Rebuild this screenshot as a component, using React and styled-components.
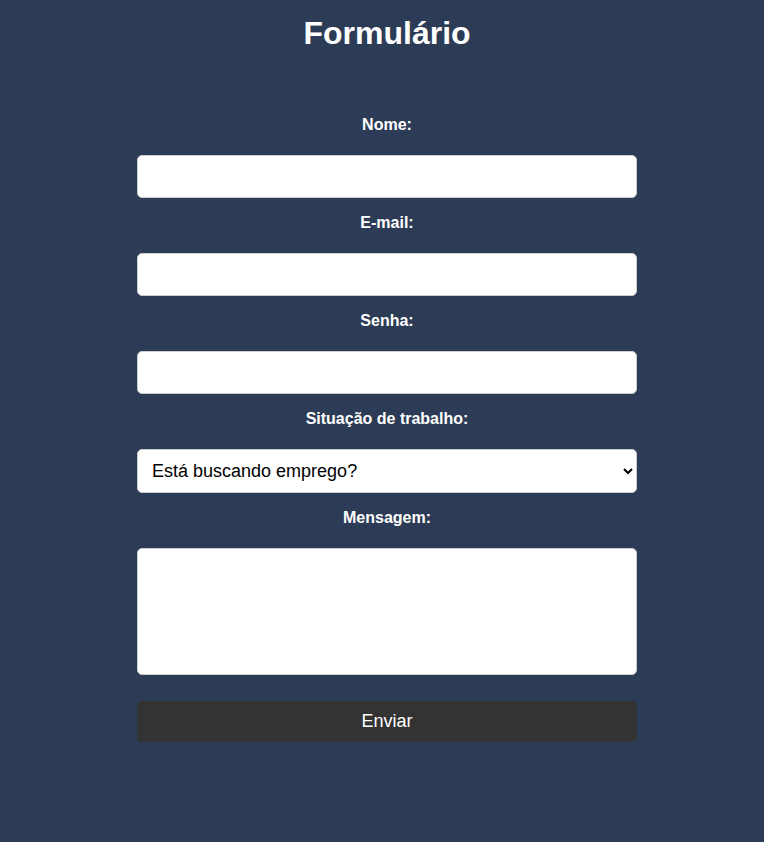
import React from 'react'
import styled, { createGlobalStyle } from 'styled-components';

const GlobalStyle = createGlobalStyle`
  html, body {
    margin: 0;
    padding: 0;
    background-color: #2d3c56;
    font-family: "Liberation Sans", Arial, sans-serif;
  }
`;

export const Container = styled.div`
  box-sizing: border-box;
  min-height: 842px;
  padding-left: 10px;
  background-color: #2d3c56;
  display: flex;
  flex-direction: column;
  align-items: center;
`;

export const Title = styled.h1`
  margin: 15px 0 0;
  font-size: 32px;
  line-height: 37px;
  font-weight: 700;
  color: #fff;
`;

export const Form = styled.form`
  width: 500px;
  margin-top: 64px;
  display: flex;
  flex-direction: column;
`;

export const Label = styled.label`
  display: block;
  text-align: center;
  color: #fff;
  font-size: 16px;
  font-weight: 700;
  line-height: 18px;
  margin: ${p => (p.$first ? '0' : '16px')} 0 21px;
`;

const fieldBase = `
  box-sizing: border-box;
  width: 100%;
  border: 1px solid #ccc;
  border-radius: 5px;
  background: #fff;
  font-family: "Liberation Sans", Arial, sans-serif;
  font-size: 18px;
  color: #000;
  outline: none;
`;

export const Input = styled.input`
  ${fieldBase}
  height: 43px;
  padding: 0 15px;
`;

export const Select = styled.select`
  ${fieldBase}
  height: 44px;
  padding: 0 10px;
`;

export const TextArea = styled.textarea`
  ${fieldBase}
  height: 127px;
  padding: 10px 15px;
  resize: none;
  display: block;
`;

export const Button = styled.button`
  margin-top: 26px;
  height: 41px;
  width: 100%;
  border: none;
  border-radius: 5px;
  background-color: #333;
  color: #fff;
  font-family: "Liberation Sans", Arial, sans-serif;
  font-size: 18px;
  cursor: pointer;
`;

function App() {
  return (
    <Container>
      <GlobalStyle />
      <Title>Formulário</Title>
      <Form onSubmit={e => e.preventDefault()}>
        <Label $first htmlFor="nome">Nome:</Label>
        <Input id="nome" type="text" />
        <Label htmlFor="email">E-mail:</Label>
        <Input id="email" type="email" />
        <Label htmlFor="senha">Senha:</Label>
        <Input id="senha" type="password" />
        <Label htmlFor="situacao">Situação de trabalho:</Label>
        <Select id="situacao" defaultValue="">
          <option value="">Está buscando emprego?</option>
          <option value="sim">Sim</option>
          <option value="nao">Não</option>
        </Select>
        <Label htmlFor="mensagem">Mensagem:</Label>
        <TextArea id="mensagem" />
        <Button type="submit">Enviar</Button>
      </Form>
    </Container>
  )
}

export default App
